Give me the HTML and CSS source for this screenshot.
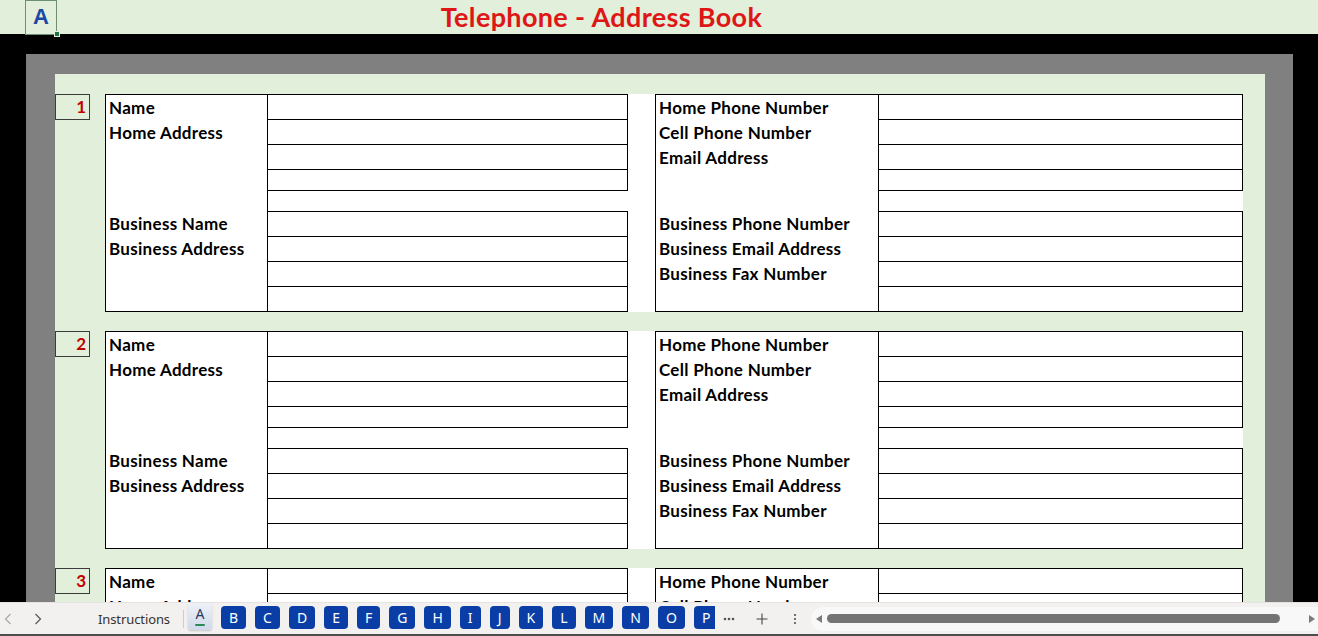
FILE: index.html
```html
<!DOCTYPE html>
<html lang="en">
<head>
<meta charset="utf-8">
<title>Telephone - Address Book</title>
<link rel="stylesheet" href="styles.css">
</head>
<body>
<div class="app">
  <header class="topbar">
    <div class="cell-a">A<span class="handle"></span></div>
    <h1 class="title">Telephone - Address Book</h1>
  </header>

  <main class="frame">
    <div class="gray">
      <div class="sheet">

        <section class="entry">
          <div class="num">1</div>
          <div class="panel">
            <div class="side side-left">
              <div class="labels">
                <div class="lgroup lgroup-top"><div class="lbl">Name</div><div class="lbl">Home Address</div></div>
                <div class="lgroup"><div class="lbl">Business Name</div><div class="lbl">Business Address</div></div>
              </div>
              <div class="values">
                <div class="vgroup vgroup-top"><div class="row"></div><div class="row"></div><div class="row"></div><div class="row row-last"></div></div>
                <div class="vgroup vgroup-bottom"><div class="row"></div><div class="row"></div><div class="row"></div><div class="row row-last"></div></div>
              </div>
            </div>
            <div class="side side-right">
              <div class="labels">
                <div class="lgroup lgroup-top"><div class="lbl">Home Phone Number</div><div class="lbl">Cell Phone Number</div><div class="lbl">Email Address</div></div>
                <div class="lgroup"><div class="lbl">Business Phone Number</div><div class="lbl">Business Email Address</div><div class="lbl">Business Fax Number</div></div>
              </div>
              <div class="values">
                <div class="vgroup vgroup-top"><div class="row"></div><div class="row"></div><div class="row"></div><div class="row row-last"></div></div>
                <div class="vgroup vgroup-bottom"><div class="row"></div><div class="row"></div><div class="row"></div><div class="row row-last"></div></div>
              </div>
            </div>
          </div>
        </section>

        <section class="entry">
          <div class="num">2</div>
          <div class="panel">
            <div class="side side-left">
              <div class="labels">
                <div class="lgroup lgroup-top"><div class="lbl">Name</div><div class="lbl">Home Address</div></div>
                <div class="lgroup"><div class="lbl">Business Name</div><div class="lbl">Business Address</div></div>
              </div>
              <div class="values">
                <div class="vgroup vgroup-top"><div class="row"></div><div class="row"></div><div class="row"></div><div class="row row-last"></div></div>
                <div class="vgroup vgroup-bottom"><div class="row"></div><div class="row"></div><div class="row"></div><div class="row row-last"></div></div>
              </div>
            </div>
            <div class="side side-right">
              <div class="labels">
                <div class="lgroup lgroup-top"><div class="lbl">Home Phone Number</div><div class="lbl">Cell Phone Number</div><div class="lbl">Email Address</div></div>
                <div class="lgroup"><div class="lbl">Business Phone Number</div><div class="lbl">Business Email Address</div><div class="lbl">Business Fax Number</div></div>
              </div>
              <div class="values">
                <div class="vgroup vgroup-top"><div class="row"></div><div class="row"></div><div class="row"></div><div class="row row-last"></div></div>
                <div class="vgroup vgroup-bottom"><div class="row"></div><div class="row"></div><div class="row"></div><div class="row row-last"></div></div>
              </div>
            </div>
          </div>
        </section>

        <section class="entry">
          <div class="num">3</div>
          <div class="panel">
            <div class="side side-left">
              <div class="labels">
                <div class="lgroup lgroup-top"><div class="lbl">Name</div><div class="lbl">Home Address</div></div>
                <div class="lgroup"><div class="lbl">Business Name</div><div class="lbl">Business Address</div></div>
              </div>
              <div class="values">
                <div class="vgroup vgroup-top"><div class="row"></div><div class="row"></div><div class="row"></div><div class="row row-last"></div></div>
                <div class="vgroup vgroup-bottom"><div class="row"></div><div class="row"></div><div class="row"></div><div class="row row-last"></div></div>
              </div>
            </div>
            <div class="side side-right">
              <div class="labels">
                <div class="lgroup lgroup-top"><div class="lbl">Home Phone Number</div><div class="lbl">Cell Phone Number</div><div class="lbl">Email Address</div></div>
                <div class="lgroup"><div class="lbl">Business Phone Number</div><div class="lbl">Business Email Address</div><div class="lbl">Business Fax Number</div></div>
              </div>
              <div class="values">
                <div class="vgroup vgroup-top"><div class="row"></div><div class="row"></div><div class="row"></div><div class="row row-last"></div></div>
                <div class="vgroup vgroup-bottom"><div class="row"></div><div class="row"></div><div class="row"></div><div class="row row-last"></div></div>
              </div>
            </div>
          </div>
        </section>

      </div>
    </div>
  </main>

  <footer class="tabbar">
    <div class="nav nav-prev"><svg width="8" height="12" viewBox="0 0 8 12"><polyline points="6.5,1 1.5,6 6.5,11" fill="none" stroke="#a8a8a8" stroke-width="1.2"/></svg></div>
    <div class="nav nav-next"><svg width="8" height="12" viewBox="0 0 8 12"><polyline points="1.5,1 6.5,6 1.5,11" fill="none" stroke="#555" stroke-width="1.2"/></svg></div>
    <div class="sheet-name">Instructions</div>
    <div class="sep"></div>
    <div class="tab-active"><span class="tab-active-letter">A</span><span class="tab-underline"></span></div>
    <div class="tabs">
      <span class="tab">B</span><span class="tab">C</span><span class="tab">D</span><span class="tab">E</span><span class="tab">F</span><span class="tab">G</span><span class="tab">H</span><span class="tab">I</span><span class="tab">J</span><span class="tab">K</span><span class="tab">L</span><span class="tab">M</span><span class="tab">N</span><span class="tab">O</span><span class="tab tab-cut">P</span>
    </div>
    <div class="more"><svg width="12" height="4" viewBox="0 0 12 4"><circle cx="2" cy="2" r="1.3" fill="#555"/><circle cx="6" cy="2" r="1.3" fill="#555"/><circle cx="10" cy="2" r="1.3" fill="#555"/></svg></div>
    <div class="add"><svg width="12" height="12" viewBox="0 0 12 12"><path d="M6 0.5V11.5M0.5 6H11.5" stroke="#444" stroke-width="1.1" fill="none"/></svg></div>
    <div class="kebab"><svg width="4" height="12" viewBox="0 0 4 12"><circle cx="2" cy="2" r="1.1" fill="#555"/><circle cx="2" cy="6" r="1.1" fill="#555"/><circle cx="2" cy="10" r="1.1" fill="#555"/></svg></div>
    <div class="hscroll">
      <svg class="arrow" width="6" height="8" viewBox="0 0 6 8"><polygon points="6,0 0,4 6,8" fill="#7a7a7a"/></svg>
      <div class="thumb"></div>
      <svg class="arrow" width="6" height="8" viewBox="0 0 6 8"><polygon points="0,0 6,4 0,8" fill="#7a7a7a"/></svg>
    </div>
  </footer>
</div>
</body>
</html>
```

FILE: styles.css
```css
* { box-sizing: border-box; }

html, body {
  margin: 0;
  padding: 0;
  width: 1318px;
  height: 636px;
  overflow: hidden;
  background: #000;
}

.app {
  width: 1318px;
  height: 636px;
  display: flex;
  flex-direction: column;
  font-family: Lato, "Noto Sans", sans-serif;
}

/* ---------- top bar ---------- */
.topbar {
  height: 34px;
  flex: 0 0 34px;
  background: #e2efda;
  display: flex;
  align-items: stretch;
  padding-left: 25px;
  position: relative;
  z-index: 2;
}

.cell-a {
  position: relative;
  width: 32px;
  height: 35px;
  border: 1px solid #6e8f74;
  color: #1b48a3;
  font-family: "Liberation Sans", Arial, sans-serif;
  font-weight: bold;
  font-size: 22px;
  line-height: 32px;
  text-align: center;
}

.handle {
  position: absolute;
  right: -4px;
  bottom: -3px;
  width: 6px;
  height: 6px;
  background: #217346;
  border: 1px solid #e2efda;
}

.title {
  margin: 0;
  width: 1089px;
  text-align: center;
  font-family: Lato, "Noto Sans", sans-serif;
  font-weight: 700;
  font-size: 27px;
  letter-spacing: 0.35px;
  line-height: 34px;
  color: #de1616;
}

/* ---------- sheet frame ---------- */
.frame {
  flex: 1 1 auto;
  min-height: 0;
  overflow: hidden;
  background: #000;
  padding: 20px 25px 0 26px;
}

.gray {
  height: 100%;
  background: #808080;
  padding: 20px 28px 0 29px;
}

.sheet {
  height: 100%;
  background: #e2efda;
  padding: 20px 0 0 0;
  overflow: hidden;
}

.entry {
  display: flex;
  align-items: flex-start;
  margin-bottom: 19px;
}

.num {
  width: 35px;
  height: 26px;
  margin-right: 15px;
  border: 1px solid #3c3c3c;
  color: #c00000;
  font-weight: 700;
  font-size: 17px;
  line-height: 23px;
  text-align: right;
  padding-right: 3px;
}

.panel {
  display: flex;
  background: #fff;
  width: 1138px;
  height: 218px;
}

.side {
  display: flex;
  height: 218px;
}

.side-left { width: 523px; }
.side-right { width: 588px; margin-left: 27px; }

.labels {
  border: 1px solid #000;
  height: 218px;
  padding-left: 3px;
}

.side-left .labels { width: 163px; }
.side-right .labels { width: 224px; }

.lgroup-top { height: 116px; }

.lbl {
  height: 25px;
  line-height: 25px;
  font-weight: 700;
  font-size: 17px;
  letter-spacing: 0.3px;
  color: #000;
  white-space: nowrap;
}

.values {
  display: flex;
  flex-direction: column;
  justify-content: space-between;
  height: 218px;
}

.side-left .values { width: 360px; }
.side-right .values { width: 364px; }

.vgroup {
  border-right: 1px solid #000;
}

.row {
  height: 25px;
  border-top: 1px solid #000;
}

.vgroup-top .row-last {
  height: 22px;
  border-bottom: 1px solid #000;
}

.vgroup-bottom .row-last {
  height: 26px;
  border-bottom: 1px solid #000;
}

/* ---------- tab bar ---------- */
.tabbar {
  flex: 0 0 34px;
  height: 34px;
  background: #f3f0f0;
  border-top: 1px solid #e6e2e2;
  border-bottom: 2px solid #4d4d4d;
  display: flex;
  align-items: center;
  font-family: "Noto Sans", "Open Sans", sans-serif;
  position: relative;
  z-index: 2;
}

.nav {
  width: 30px;
  display: flex;
  justify-content: center;
}

.nav-prev { margin-left: -7px; }

.sheet-name {
  margin-left: 45px;
  font-size: 13px;
  color: #333;
  letter-spacing: -0.1px;
  line-height: 18px;
}

.sep {
  width: 1px;
  height: 18px;
  background: #cfcccc;
  margin-left: 13px;
}

.tab-active {
  margin-left: 4px;
  width: 24px;
  height: 27px;
  align-self: flex-start;
  background: linear-gradient(#eef1f7, #cfd9ea);
  border-radius: 3px;
  box-shadow: 0 1px 2px rgba(0,0,0,0.18);
  display: flex;
  flex-direction: column;
  align-items: center;
}

.tab-active-letter {
  font-size: 14px;
  line-height: 20px;
  margin-top: 1px;
  color: #2a3a60;
}

.tab-underline {
  width: 10px;
  height: 2px;
  background: #2a8a5a;
  border-radius: 1px;
}

.tabs {
  margin-left: 9px;
  width: 494px;
  align-self: stretch;
  overflow: hidden;
  display: flex;
  gap: 9px;
  align-items: flex-start;
  padding-top: 3px;
}

.tab {
  flex: 0 0 auto;
  height: 23px;
  min-width: 20px;
  padding: 0 8px;
  border-radius: 4px;
  background: #0a3ea6;
  color: #fff;
  font-size: 14px;
  line-height: 23px;
  text-align: center;
}

.tab-cut {
  padding-right: 14px;
  border-radius: 4px 0 0 4px;
}

.more {
  margin-left: 8px;
  display: flex;
  width: 14px;
}

.add {
  margin-left: 19px;
  display: flex;
}

.kebab {
  margin-left: 25px;
  display: flex;
}

.hscroll {
  margin-left: 14px;
  flex: 1 1 auto;
  height: 24px;
  background: #f9f8f8;
  border-radius: 12px 0 0 12px;
  display: flex;
  align-items: center;
  padding: 0 3px 0 5px;
}

.thumb {
  flex: 1 1 auto;
  height: 9px;
  border-radius: 5px;
  background: #747474;
  margin: 0 29px 0 5px;
}
```
